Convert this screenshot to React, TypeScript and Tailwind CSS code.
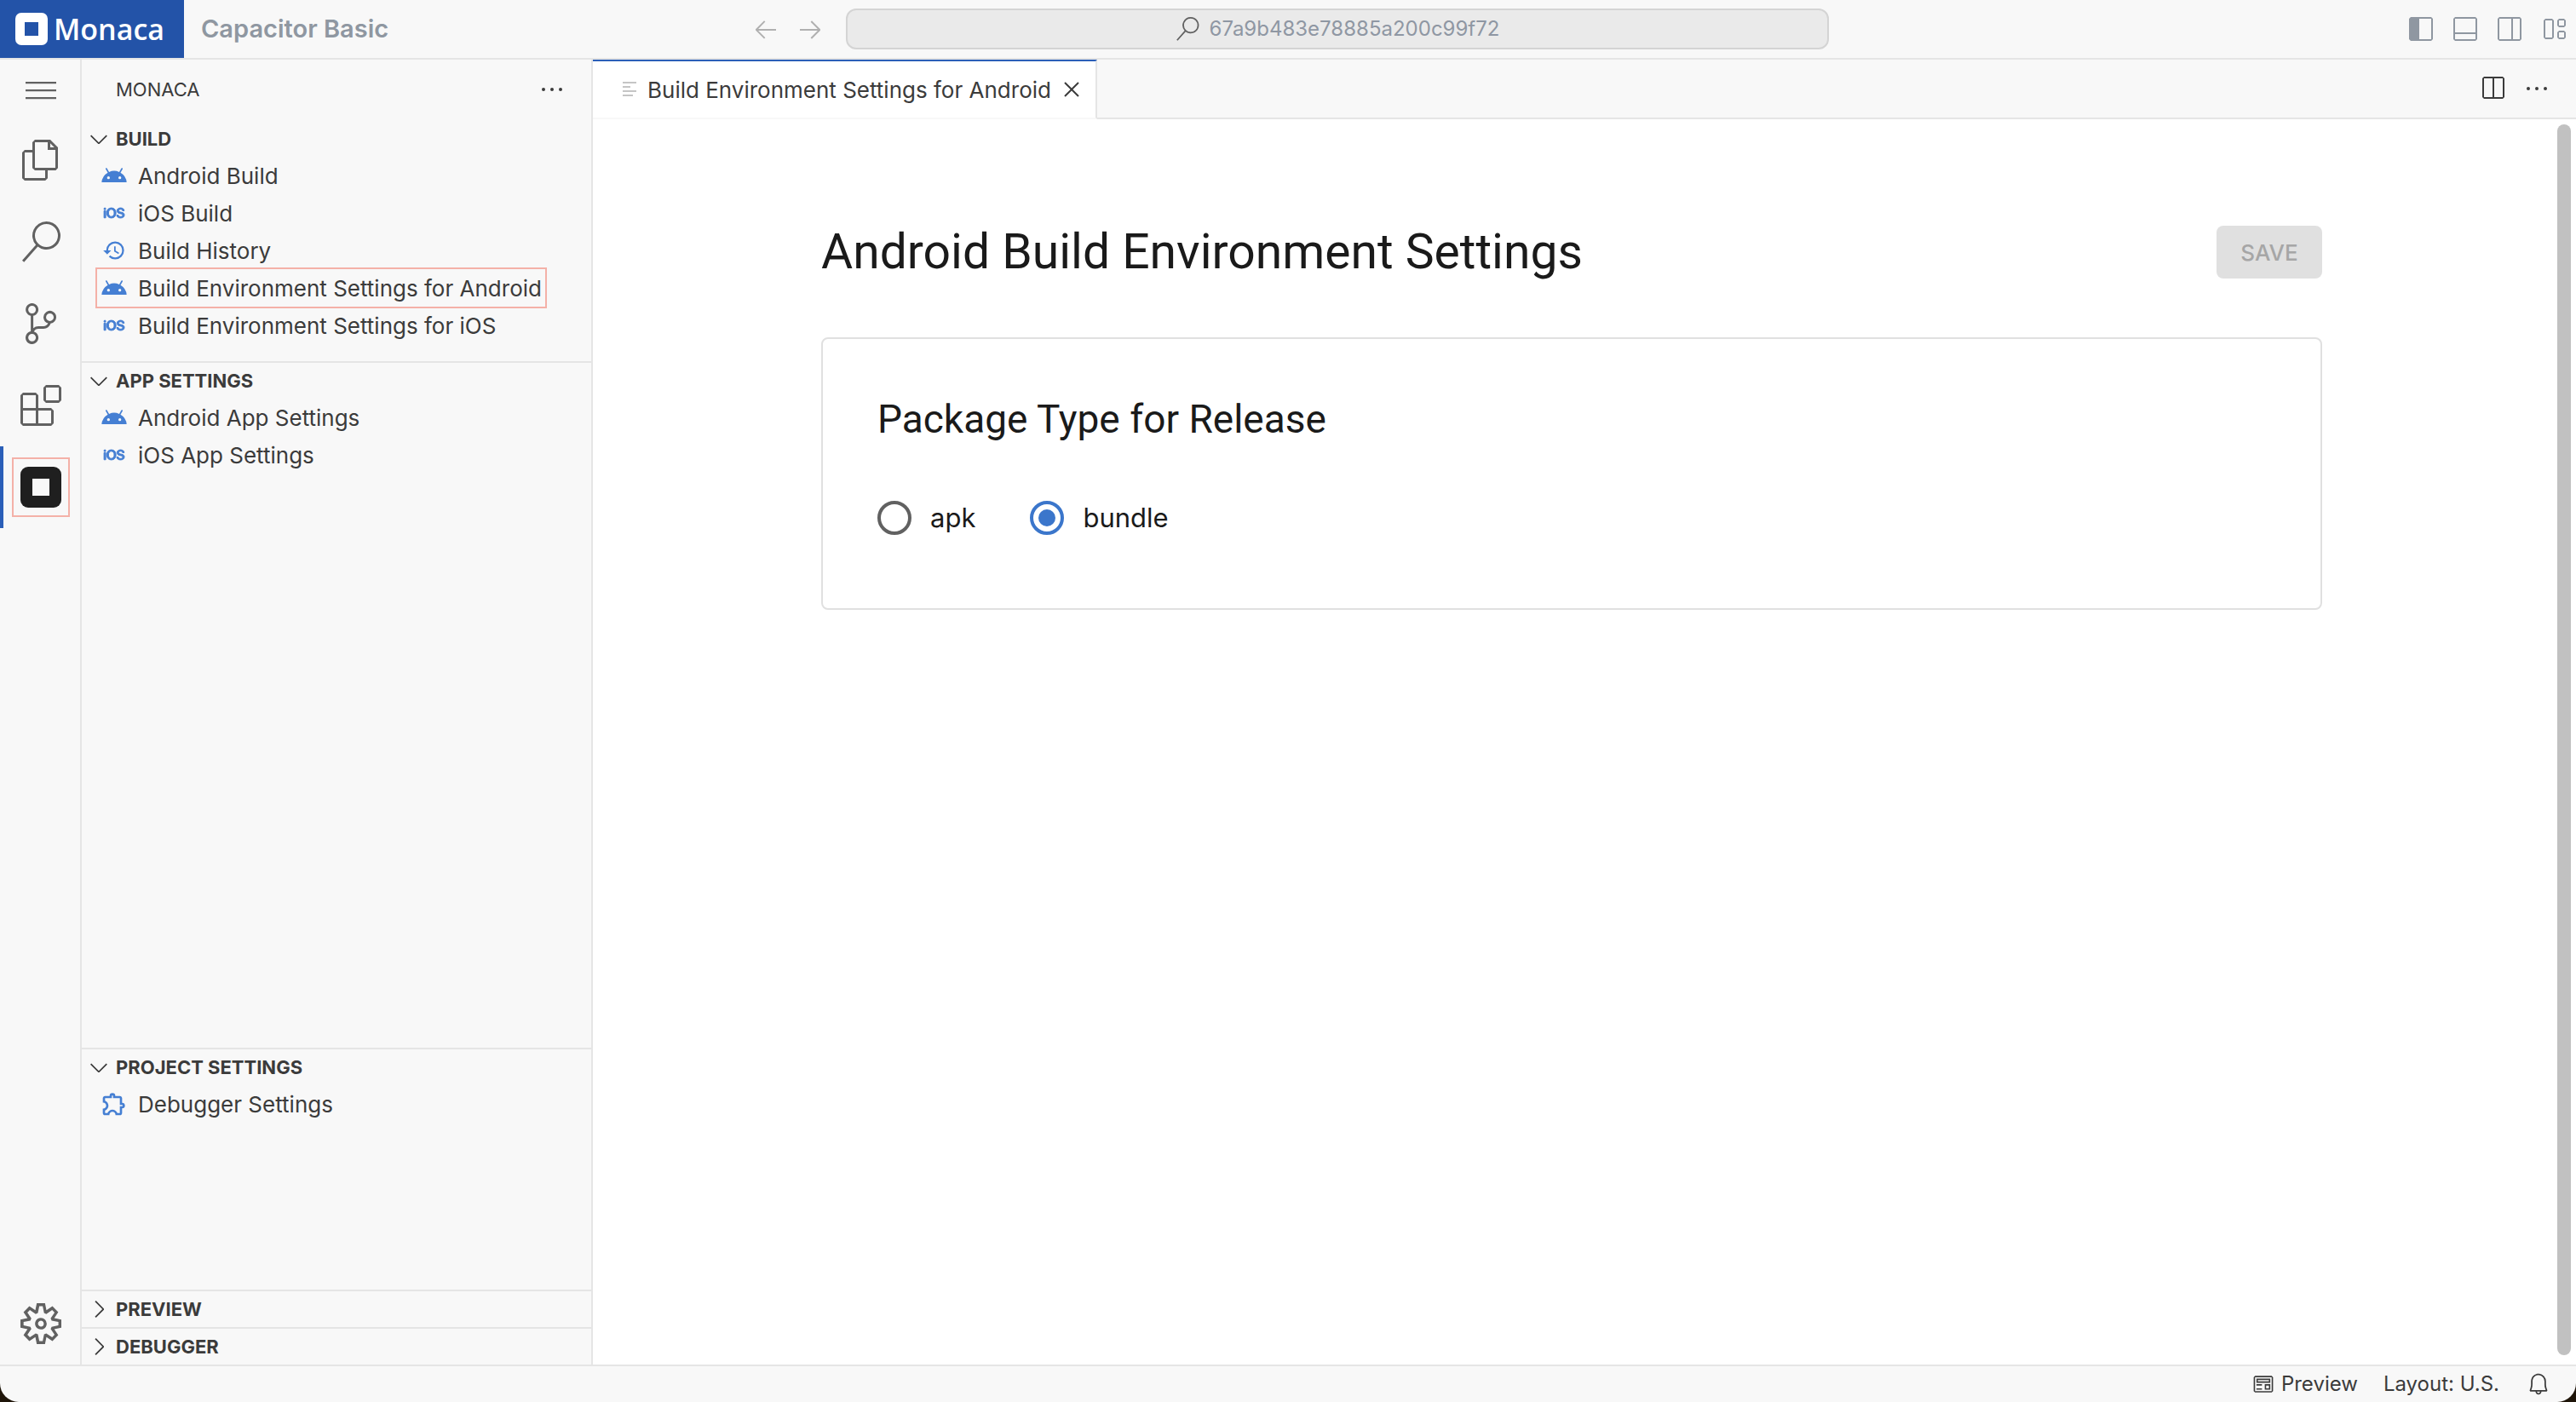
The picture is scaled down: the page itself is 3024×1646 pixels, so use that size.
import { useState, type ReactNode } from "react";
import {
  VscArrowLeft,
  VscArrowRight,
  VscBell,
  VscChevronDown,
  VscChevronRight,
  VscClose,
  VscEllipsis,
  VscExtensions,
  VscFiles,
  VscLayout,
  VscLayoutPanelOff,
  VscLayoutSidebarLeft,
  VscLayoutSidebarRightOff,
  VscMenu,
  VscPreview,
  VscSearch,
  VscSettingsGear,
  VscSourceControl,
  VscSplitHorizontal,
} from "react-icons/vsc";
import { MdAndroid, MdHistory, MdOutlineExtension } from "react-icons/md";
import { SiIos } from "react-icons/si";

const androidIcon = <MdAndroid className="size-8" />;
const iosIcon = <SiIos className="size-6 overflow-visible stroke-current stroke-1" />;

function IconButton({ label, className, children }: { label: string; className: string; children: ReactNode }) {
  return (
    <button type="button" aria-label={label} className={`flex items-center justify-center ${className}`}>
      {children}
    </button>
  );
}

function TitleBar() {
  return (
    <header className="grid h-[70px] shrink-0 grid-cols-[1fr_auto_1fr] items-center border-b-2 border-[#e5e5e5]">
      <div className="flex h-full items-center">
        <a href="#" className="flex h-full w-[216px] items-center gap-[7px] bg-[#2353a8] pl-[18px]">
          <svg viewBox="0 0 38 38" className="size-[38px]" aria-hidden="true">
            <path
              fillRule="evenodd"
              fill="#fff"
              d="M7 0h24a7 7 0 0 1 7 7v24a7 7 0 0 1-7 7H7a7 7 0 0 1-7-7V7a7 7 0 0 1 7-7zM11 11v16h16V11z"
            />
          </svg>
          <span className="font-['Open_Sans',sans-serif] text-[34px] leading-none font-semibold text-white">Monaca</span>
        </a>
        <span className="pl-5 text-[29px] font-semibold whitespace-nowrap text-[#8f97a1]">Capacitor Basic</span>
      </div>
      <div className="flex items-center">
        <IconButton label="Go back" className="size-11 text-[#b0b0b0]">
          <VscArrowLeft className="size-8" />
        </IconButton>
        <IconButton label="Go forward" className="mx-2 size-11 text-[#b0b0b0]">
          <VscArrowRight className="size-8" />
        </IconButton>
        <button
          type="button"
          className="ml-3 flex h-12 w-[1154px] items-center justify-center gap-3 rounded-xl border-2 border-[#d4d4d4] bg-[#eaeaea] text-2xl text-[#8f97a3]"
        >
          <VscSearch className="size-7 text-[#616161]" />
          67a9b483e78885a200c99f72
        </button>
      </div>
      <div className="flex items-center justify-end gap-2 pr-1 text-[#8f97a1]">
        <IconButton label="Toggle side bar" className="size-11">
          <VscLayoutSidebarLeft className="size-8" />
        </IconButton>
        <IconButton label="Toggle panel" className="size-11">
          <VscLayoutPanelOff className="size-8" />
        </IconButton>
        <IconButton label="Toggle secondary side bar" className="size-11">
          <VscLayoutSidebarRightOff className="size-8" />
        </IconButton>
        <IconButton label="Customize layout" className="size-11">
          <VscLayout className="size-8" />
        </IconButton>
      </div>
    </header>
  );
}

function ActivityBar() {
  return (
    <nav className="flex w-24 shrink-0 flex-col text-[#616161] shadow-[inset_-2px_0_0_#e5e5e5]">
      <IconButton label="Menu" className="h-[70px]">
        <VscMenu className="size-9" />
      </IconButton>
      <IconButton label="Explorer" className="h-24">
        <VscFiles className="size-12" />
      </IconButton>
      <IconButton label="Search" className="h-24">
        <VscSearch className="size-12" />
      </IconButton>
      <IconButton label="Source control" className="h-24">
        <VscSourceControl className="size-12" />
      </IconButton>
      <IconButton label="Extensions" className="h-24">
        <VscExtensions className="size-12" />
      </IconButton>
      <IconButton label="Monaca" className="relative h-24">
        <span className="absolute inset-y-0 left-0 w-1 bg-[#2b5fb8]" />
        <span className="flex h-[70px] w-[68px] items-center justify-center border-2 border-[#f4b1a8]">
          <svg viewBox="0 0 48 48" className="size-12" aria-hidden="true">
            <rect width="48" height="48" rx="9" fill="#1f1f1f" />
            <rect x="14" y="14" width="20" height="20" fill="#f8f8f8" />
          </svg>
        </span>
      </IconButton>
      <IconButton label="Manage" className="mt-auto h-24">
        <VscSettingsGear className="size-12" />
      </IconButton>
    </nav>
  );
}

function Pane({
  title,
  open = true,
  className = "",
  children,
}: {
  title: string;
  open?: boolean;
  className?: string;
  children?: ReactNode;
}) {
  return (
    <section className={`flex flex-col border-[#e5e5e5] ${className}`}>
      <h3>
        <button
          type="button"
          aria-expanded={open}
          className="flex h-[42px] w-full items-center gap-1 pl-1 text-[22px] font-bold"
        >
          {open ? <VscChevronDown className="size-8" /> : <VscChevronRight className="size-8" />}
          {title}
        </button>
      </h3>
      {children && <ul>{children}</ul>}
    </section>
  );
}

function Item({ icon, label, marked = false }: { icon: ReactNode; label: string; marked?: boolean }) {
  return (
    <li className="relative">
      <a href="#" className="flex h-11 items-center gap-3 pl-[22px] text-[26px] whitespace-nowrap">
        <span className="flex size-8 items-center justify-center text-[#457fd3]">{icon}</span>
        {label}
      </a>
      {marked && <span className="absolute -inset-y-0.5 left-4 w-[530px] border-2 border-[#f4b1a8]" />}
    </li>
  );
}

function SideBar() {
  return (
    <aside className="flex w-[600px] shrink-0 flex-col border-r-2 border-[#e5e5e5]">
      <div className="flex h-[70px] items-center justify-between pr-[30px] pl-10">
        <h2 className="text-[22px]">MONACA</h2>
        <IconButton label="Views and more actions" className="size-8">
          <VscEllipsis className="size-8" />
        </IconButton>
      </div>
      <Pane title="BUILD" className="h-[284px] pt-0.5">
        <Item icon={androidIcon} label="Android Build" />
        <Item icon={iosIcon} label="iOS Build" />
        <Item icon={<MdHistory className="size-7" />} label="Build History" />
        <Item icon={androidIcon} label="Build Environment Settings for Android" marked />
        <Item icon={iosIcon} label="Build Environment Settings for iOS" />
      </Pane>
      <Pane title="APP SETTINGS" className="flex-1 border-t-2">
        <Item icon={androidIcon} label="Android App Settings" />
        <Item icon={iosIcon} label="iOS App Settings" />
      </Pane>
      <Pane title="PROJECT SETTINGS" className="h-[284px] border-t-2">
        <Item icon={<MdOutlineExtension className="size-8" />} label="Debugger Settings" />
      </Pane>
      <Pane title="PREVIEW" open={false} className="border-t-2" />
      <Pane title="DEBUGGER" open={false} className="border-t-2" />
    </aside>
  );
}

function TabStrip() {
  return (
    <div className="flex h-[70px] shrink-0">
      <div className="flex items-center border-t-2 border-r-2 border-b-2 border-t-[#2b5fb8] border-r-[#e5e5e5] border-b-[#f8f8f8] bg-white pr-3 pl-[34px]">
        <svg viewBox="0 0 18 18" className="size-[18px]" stroke="#c5c5c5" strokeWidth="2" aria-hidden="true">
          <path d="M1 1h16M1 6h9M1 11h16M1 16h12" />
        </svg>
        <span className="pl-3 text-[26px] whitespace-nowrap">Build Environment Settings for Android</span>
        <IconButton label="Close tab" className="ml-2 size-8">
          <VscClose className="size-8" />
        </IconButton>
      </div>
      <div className="flex flex-1 items-center justify-end gap-5 border-b-2 border-[#e5e5e5] pr-[30px]">
        <IconButton label="Split editor" className="size-8">
          <VscSplitHorizontal className="size-8" />
        </IconButton>
        <IconButton label="More actions" className="size-8">
          <VscEllipsis className="size-8" />
        </IconButton>
      </div>
    </div>
  );
}

function PackageType() {
  const [value, setValue] = useState("bundle");
  return (
    <div className="flex gap-16 pt-[66px]">
      {["apk", "bundle"].map((name) => (
        <label key={name} className="flex items-center gap-[22px] text-[31px] leading-10">
          <input
            type="radio"
            name="package-type"
            value={name}
            checked={value === name}
            onChange={() => setValue(name)}
            className="flex size-10 appearance-none items-center justify-center rounded-full border-4 border-[#616161] before:size-5 before:rounded-full checked:border-[#3b76cb] checked:before:bg-[#3b76cb]"
          />
          {name}
        </label>
      ))}
    </div>
  );
}

function Editor() {
  return (
    <main className="flex min-w-0 flex-1 flex-col">
      <TabStrip />
      <div className="flex min-h-0 flex-1 bg-white">
        <div className="min-w-0 flex-1 px-4 pt-[125px] text-[#1a1a1a]">
          <div className="mx-auto max-w-[1762px]">
            <div className="flex h-[62px] items-center justify-between">
              <h1 className="font-['Roboto',sans-serif] text-[57px] whitespace-nowrap">
                Android Build Environment Settings
              </h1>
              <button
                type="button"
                disabled
                className="h-[62px] w-[124px] rounded-lg bg-[#e0e0e0] text-[26px] font-medium text-[#a6a6a6]"
              >
                SAVE
              </button>
            </div>
            <section className="mt-[69px] rounded-lg border-2 border-[#e0e0e0] px-16 pt-16 pb-[86px]">
              <h2 className="font-['Roboto',sans-serif] text-[46px] leading-[60px]">Package Type for Release</h2>
              <PackageType />
            </section>
          </div>
        </div>
        <div className="w-[30px] py-1.5 pl-2">
          <div className="h-full max-h-[1445px] w-4 rounded-full bg-[#c1c1c1]" />
        </div>
      </div>
    </main>
  );
}

function StatusBar() {
  return (
    <footer className="flex h-11 shrink-0 items-center justify-end gap-[30px] border-t-2 border-[#e5e5e5] pr-7 text-2xl">
      <button type="button" className="flex items-center gap-2">
        <VscPreview className="size-[26px]" />
        Preview
      </button>
      <button type="button">Layout: U.S.</button>
      <IconButton label="Notifications" className="size-8">
        <VscBell className="size-7" />
      </IconButton>
    </footer>
  );
}

export default function App() {
  return (
    <div className="h-screen bg-[#1f1509] font-['Inter',sans-serif]">
      <div className="flex h-full flex-col overflow-hidden rounded-b-[22px] bg-[#f8f8f8] text-[#3b3b3b]">
        <TitleBar />
        <div className="flex min-h-0 flex-1">
          <ActivityBar />
          <SideBar />
          <Editor />
        </div>
        <StatusBar />
      </div>
    </div>
  );
}
